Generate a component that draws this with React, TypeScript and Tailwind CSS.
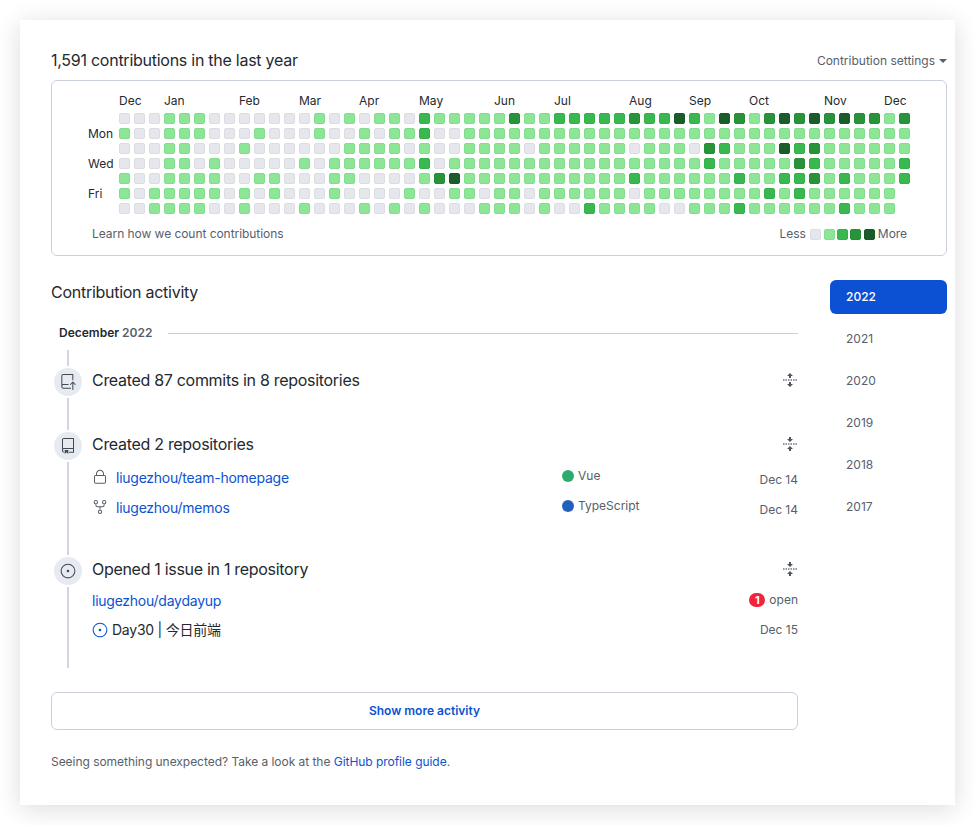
import { GoRepoPush, GoRepo, GoLock, GoRepoForked, GoIssueOpened } from "react-icons/go"

const rows = [
  "00011100000001010110211111" + "311222223224214313434343313",
  "10011100010001001011200111" + "111111111111111111111111111",
  "00011000100000011110100111" + "101111110111032111423111111",
  "00011010000010111111201111" + "111111111111121111132111112",
  "10011110011000110000134111" + "111111112111111211223121112",
  "10111110101000100001001101" + "10111111011111111212111111",
  "00111100100010001010100011" + "10100211110011121111112111",
]

const months = [
  ["Dec", 0],
  ["Jan", 3],
  ["Feb", 8],
  ["Mar", 12],
  ["Apr", 16],
  ["May", 20],
  ["Jun", 25],
  ["Jul", 29],
  ["Aug", 34],
  ["Sep", 38],
  ["Oct", 42],
  ["Nov", 47],
  ["Dec", 51],
] as const

const levels: Record<string, string> = {
  "0": "bg-[#e6e7ec] border border-[#dcdde3]",
  "1": "bg-[#8ce696] border border-[#84dd8e]",
  "2": "bg-[#38b84f] border border-[#34b04a]",
  "3": "bg-[#289339] border border-[#268c36]",
  "4": "bg-[#1b5c2b] border border-[#1a5729]",
}

const years = ["2022", "2021", "2020", "2019", "2018", "2017"]

function Cell({ level }: { level: string }) {
  return <div className={`w-[11px] h-[11px] rounded-[2px] ${levels[level]}`} />
}

function Graph() {
  return (
    <div className="border border-[#c9d0dc] rounded-[6px] h-[176px] pl-[36px] pt-[12px]">
      <div className="flex">
        <div className="w-[31px] pt-[18px] text-[12px] leading-[15px] text-[#24292f]">
          <div className="mt-[15px]">Mon</div>
          <div className="mt-[15px]">Wed</div>
          <div className="mt-[15px]">Fri</div>
        </div>
        <div>
          <div className="grid grid-cols-[repeat(53,11px)] gap-x-[4px] h-[20px] text-[12px] leading-[16px] text-[#24292f]">
            {months.map(([name, col]) => (
              <div key={`${name}${col}`} className="whitespace-nowrap" style={{ gridColumnStart: col + 1 }}>
                {name}
              </div>
            ))}
          </div>
          <div className="flex flex-col gap-y-[4px]">
            {rows.map((row, y) => (
              <div key={y} className="flex gap-x-[4px]">
                {row.split("").map((level, x) => (
                  <Cell key={x} level={level} />
                ))}
              </div>
            ))}
          </div>
        </div>
      </div>
      <div className="flex items-center justify-between mt-[12px] pl-[4px] pr-[39px] text-[12px] leading-[16px] text-[#57606a] tracking-[-0.05px]">
        <span>Learn how we count contributions</span>
        <div className="flex items-center gap-x-[2px]">
          <span className="mr-[2px]">Less</span>
          <Cell level="0" />
          <div className="ml-px">
            <Cell level="1" />
          </div>
          <Cell level="2" />
          <Cell level="3" />
          <div className="ml-px">
            <Cell level="4" />
          </div>
          <span className="ml-px">More</span>
        </div>
      </div>
    </div>
  )
}

function Badge({ icon }: { icon: React.ReactNode }) {
  return (
    <div className="relative z-10 ml-px w-[32px] h-[32px] shrink-0 rounded-full bg-[#e7eaf0] border-2 border-white flex items-center justify-center text-[#424a53]">
      {icon}
    </div>
  )
}

function FoldIcon({ unfold }: { unfold?: boolean }) {
  return (
    <svg width="16" height="16" viewBox="0 0 16 16" className="text-[#4d555e]">
      {unfold ? (
        <>
          <polygon points="8,1 11,4 9,4 9,6 7,6 7,4 5,4" fill="currentColor" />
          <polygon points="8,15 11,12 9,12 9,10 7,10 7,12 5,12" fill="currentColor" />
        </>
      ) : (
        <>
          <polygon points="7,1 9,1 9,3 11,3 8,6 5,3 7,3" fill="currentColor" />
          <polygon points="7,15 9,15 9,13 11,13 8,10 5,13 7,13" fill="currentColor" />
        </>
      )}
      <line x1="1" y1="8" x2="15" y2="8" stroke="#6e767f" strokeWidth="1.4" strokeDasharray="1.5 1" />
    </svg>
  )
}

function Language({ color, name }: { color: string; name: string }) {
  return (
    <div className="w-[196px] flex items-center gap-x-[4px] text-[12px] leading-[16px] text-[#57606a] mt-[-3px]">
      <span className={`w-[12px] h-[12px] rounded-full ${color}`} />
      <span>{name}</span>
    </div>
  )
}

function RepoRow({ icon, name, color, lang }: { icon: React.ReactNode; name: string; color: string; lang: string }) {
  return (
    <div className="flex items-center h-[30px]">
      <span className="w-[24px] text-[#57606a]">{icon}</span>
      <a className="flex-1 text-[14px] text-[#0b52d1] tracking-[-0.25px]">{name}</a>
      <Language color={color} name={lang} />
      <span className="w-[40px] text-right text-[12px] text-[#57606a] mt-[5px] whitespace-nowrap">Dec 14</span>
    </div>
  )
}

function Heading({ text, unfold }: { text: string; unfold?: boolean }) {
  return (
    <div className="flex items-center justify-between h-[28px]">
      <h4 className="text-[16px] text-[#24292f] tracking-[-0.3px]">{text}</h4>
      <FoldIcon unfold={unfold} />
    </div>
  )
}

export default function App() {
  return (
    <div className="bg-white w-[975px] h-[825px] p-[20px] font-['Inter','Noto_Sans_CJK_SC',sans-serif]">
      <div className="bg-white h-[785px] pl-[31px] pr-[8px] pt-[28px] shadow-[0_4px_24px_rgba(0,0,0,0.14)]">
        <div className="flex items-center justify-between h-[24px] mb-[8px]">
          <h2 className="text-[16px] text-[#24292f] tracking-[-0.26px]">1,591 contributions in the last year</h2>
          <div className="flex items-center gap-x-[4px] text-[12px] text-[#57606a] mt-[1px]">
            Contribution settings
            <span className="w-0 h-0 border-x-[4px] border-x-transparent border-t-[4px] border-t-[#57606a]" />
          </div>
        </div>
        <Graph />

        <div className="flex mt-[24px] gap-x-[32px]">
          <div className="w-[747px]">
            <h2 className="text-[16px] leading-[24px] text-[#24292f] tracking-[-0.27px]">Contribution activity</h2>
            <div className="flex items-center h-[20px] mt-[19px] pl-[8px]">
              <span className="text-[12px] font-semibold text-[#24292f]">
                December <span className="text-[#57606a]">2022</span>
              </span>
              <div className="flex-1 h-px bg-[#c9d0dc] ml-[16px]" />
            </div>

            <div className="relative mt-[7px]">
              <div className="absolute left-[16px] top-0 bottom-0 w-[2px] bg-[#d0d7e2]" />
              <div className="flex gap-x-[8px] pt-[16px] h-[80px]">
                <Badge icon={<GoRepoPush size={16} />} />
                <div className="flex-1">
                  <Heading text="Created 87 commits in 8 repositories" unfold />
                </div>
              </div>
              <div className="flex gap-x-[8px] h-[125px]">
                <Badge icon={<GoRepo size={16} />} />
                <div className="flex-1">
                  <Heading text="Created 2 repositories" />
                  <div className="mt-[4px]">
                    <RepoRow icon={<GoLock size={16} />} name="liugezhou/team-homepage" color="bg-[#2fab6e]" lang="Vue" />
                    <RepoRow icon={<GoRepoForked size={16} />} name="liugezhou/memos" color="bg-[#2360bd]" lang="TypeScript" />
                  </div>
                </div>
              </div>
              <div className="flex gap-x-[8px] h-[113px]">
                <Badge icon={<GoIssueOpened size={16} />} />
                <div className="flex-1">
                  <Heading text="Opened 1 issue in 1 repository" />
                  <div className="flex items-center justify-between h-[30px] mt-[2px]">
                    <a className="text-[14px] text-[#0b52d1] tracking-[-0.25px]">liugezhou/daydayup</a>
                    <div className="flex items-center gap-x-[4px] text-[12px] text-[#57606a]">
                      <span className="w-[16px] h-[14px] rounded-full bg-[#f0243c] text-white text-[11px] font-bold leading-[14px] text-center">1</span>
                      open
                    </div>
                  </div>
                  <div className="flex items-center justify-between h-[29px]">
                    <div className="flex items-center gap-x-[4px] text-[14px] text-[#24292f] tracking-[-0.25px]">
                      <GoIssueOpened size={16} className="text-[#0b52d1]" />
                      Day30 | 今日前端
                    </div>
                    <span className="text-[12px] text-[#57606a]">Dec 15</span>
                  </div>
                </div>
              </div>
            </div>

            <button className="w-full h-[38px] mt-[24px] border border-[#c9d0dc] rounded-[6px] text-[12px] font-semibold text-[#0b52d1]">
              Show more activity
            </button>
            <p className="mt-[23px] text-[12px] leading-[18px] text-[#57606a] tracking-[-0.04px]">
              Seeing something unexpected? Take a look at the <a className="text-[#0b52d1]">GitHub profile guide</a>.
            </p>
          </div>

          <div className="flex-1 flex flex-col gap-y-[8px]">
            {years.map((year, i) => (
              <div
                key={year}
                className={`h-[34px] flex items-center pl-[16px] rounded-[6px] text-[12px] ${i === 0 ? "bg-[#0c50d3] text-white font-medium" : "text-[#57606a]"}`}
              >
                {year}
              </div>
            ))}
          </div>
        </div>
      </div>
    </div>
  )
}
